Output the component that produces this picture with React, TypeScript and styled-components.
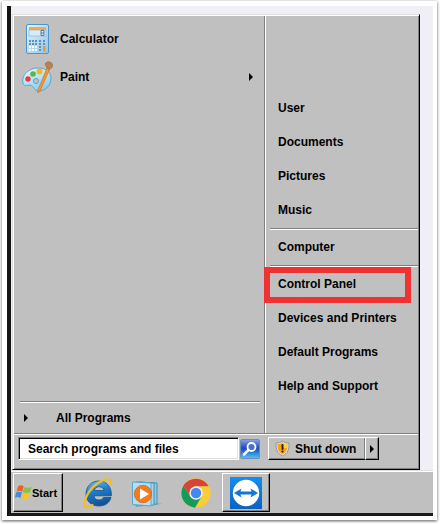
import React from "react";
import styled, { createGlobalStyle } from "styled-components";

const Global = createGlobalStyle`
  * { box-sizing: border-box; }
  body { margin: 0; background: #fff; }
  body, button, input { font-family: "Liberation Sans", Arial, sans-serif; font-size: 12px; font-weight: 700; color: #000; }
  button { cursor: pointer; }
`;

const Frame = styled.main`
  margin: 1px 3px 3px 2px;
  padding: 5px 4px 4px 5px;
  background: #fff;
  box-shadow: 0 1px 3px rgba(0, 0, 0, 0.65);
`;

const Desktop = styled.div`
  padding-top: 8px;
  border-left: 4px solid #141414;
  border-bottom: 3px solid #1c1a1c;
  background: #f0eff6;
`;

const StartMenu = styled.section`
  margin: 0 13px 0 1px;
  background: #c0c0c0;
  border: 1px solid #dfdfdf;
  border-right-color: #000;
  border-bottom-color: #000;
  box-shadow: inset 1px 1px #fff, inset -1px -1px #808080;
  padding: 1px;
`;

const Columns = styled.div`
  display: grid;
  grid-template-columns: minmax(0, 1fr) 153px;
`;

const Programs = styled.div`
  display: flex;
  flex-direction: column;
  padding: 4px 4px 0 6px;
  border-right: 1px solid #808080;
`;

const Spacer = styled.div`
  flex: 1;
`;

const Places = styled.nav`
  display: flex;
  flex-direction: column;
  padding: 75px 0 30px;
  border-left: 1px solid #fff;
`;

const Groove = styled.hr<{ $inset?: boolean }>`
  flex: none;
  width: auto;
  height: 2px;
  margin: ${(p) => (p.$inset ? "1px 0 0 4px" : "0")};
  border: 0;
  border-top: 1px solid #808080;
  border-bottom: 1px solid #fff;
`;

const PlainButton = styled.button`
  display: flex;
  align-items: center;
  padding: 0;
  border: 0;
  background: none;
  text-align: left;
`;

const ProgramItem = styled(PlainButton)`
  height: 38px;
  gap: 7px;
  padding: 0 7px 0 1px;
`;

const ProgramName = styled.span`
  flex: 1;
`;

const AllPrograms = styled(PlainButton)`
  height: 30px;
  gap: 28px;
  padding: 0 0 0 4px;
`;

const PlaceItem = styled(PlainButton)`
  position: relative;
  height: 34px;
  padding: 0 0 0 12px;
`;

const Highlight = styled.span`
  position: absolute;
  inset: 0 7px -2px -2px;
  border: 6px solid #f03232;
  pointer-events: none;
`;

const MenuFooter = styled.div`
  display: grid;
  grid-template-columns: minmax(0, 1fr) 150px;
  padding: 2px 0 8px 4px;
`;

const SearchBar = styled.form`
  display: flex;
  align-items: center;
  gap: 1px;
  padding-right: 8px;
`;

const SearchInput = styled.input`
  flex: 1;
  min-width: 0;
  height: 23px;
  padding: 0 9px;
  border: 1px solid #808080;
  border-right-color: #fff;
  border-bottom-color: #fff;
  border-radius: 0;
  background: #fff;
  box-shadow: inset 1px 1px #000, inset -1px -1px #dfdfdf;

  &::placeholder { color: #000; opacity: 1; }
`;

const SearchButton = styled.button`
  display: flex;
  width: 20px;
  height: 20px;
  padding: 0;
  border: 0;
  background: none;
`;

const Raised = styled.button`
  display: flex;
  align-items: center;
  padding: 0;
  border: 1px solid #fff;
  border-right-color: #000;
  border-bottom-color: #000;
  background: #c0c0c0;
  box-shadow: inset -1px -1px #808080;
`;

const Power = styled.div`
  display: flex;
`;

const ShutDown = styled(Raised)`
  width: 97px;
  height: 23px;
  gap: 5px;
  padding-left: 6px;
  border-right: 0;
`;

const PowerOptions = styled(Raised)`
  width: 14px;
  height: 23px;
  justify-content: center;
`;

const Taskbar = styled.footer`
  display: flex;
  align-items: flex-start;
  height: 43px;
  padding: 2px 0 0 2px;
  border-top: 1px solid #dfdfdf;
  background: #c0c0c0;
  box-shadow: inset 0 1px #fff;
`;

const StartButton = styled(Raised)`
  width: 50px;
  height: 39px;
  padding-left: 1px;
  font-size: 11px;
`;

const Launchers = styled.div`
  display: flex;
  margin-left: 10px;
`;

const Launcher = styled(PlainButton)`
  width: 49px;
  height: 39px;
  justify-content: center;
`;

const ActiveTask = styled(Raised)`
  width: 48px;
  height: 39px;
  margin-left: 2px;
  justify-content: center;
`;

const Arrow = () => (
  <svg width="4" height="8" viewBox="0 0 4 8" aria-hidden="true">
    <path d="M0 0v8l4-4z" fill="#000" />
  </svg>
);

const CalculatorIcon = () => (
  <svg width="32" height="32" viewBox="0 0 32 32" aria-hidden="true">
    <defs>
      <linearGradient id="calc" x2="1" y2="1">
        <stop stopColor="#e4f5fd" />
        <stop offset="1" stopColor="#8ec5e8" />
      </linearGradient>
    </defs>
    <rect x="5.500" y="1.500" width="22" height="29" rx="1.500" fill="url(#calc)" stroke="#4a97cc" />
    <rect x="8" y="4" width="17" height="3" fill="#f5ac3d" />
    <rect x="8" y="7" width="17" height="6" fill="#dceaf5" stroke="#82aed0" strokeWidth=".6" />
    <path d="M20 7.500h3v5h-3zM20 10h3" fill="none" stroke="#5a73a8" />
    {[17, 20, 23, 26].map((y) =>
      [8, 11, 14, 18, 22].map((x) => (
        <rect key={`${x}-${y}`} x={x} y={y} width="2" height="2" fill={x < 17 && y > 20 ? "#fff" : "#5f90bd"} />
      )),
    )}
    <rect x="22" y="23" width="2.500" height="5.500" fill="#f2962a" />
  </svg>
);

const PaintIcon = () => (
  <svg width="32" height="32" viewBox="0 0 32 32" aria-hidden="true">
    <defs>
      <linearGradient id="palette" x2=".6" y2="1">
        <stop stopColor="#f2fbff" />
        <stop offset="1" stopColor="#8ccbe9" />
      </linearGradient>
    </defs>
    <path
      d="M2 22C0 14 8 7 17 7c8 0 13 4 13 10 0 8-6 13-12 13-5 0-5-5-9-6-3 0-6 2-7-2z"
      fill="url(#palette)"
      stroke="#5fa4ce"
    />
    <circle cx="7" cy="18" r="2.700" fill="#de4140" />
    <circle cx="12" cy="13" r="2.800" fill="#54b848" />
    <circle cx="18.500" cy="10.500" r="3" fill="#f6b427" />
    <circle cx="15" cy="20" r="2.500" fill="#b4c8d2" stroke="#5d9cc3" />
    <path d="M26 7l2.500 1.500L18.500 31l-2 .500.300-2z" fill="#f39a32" stroke="#d36d1c" strokeWidth=".7" />
    <path d="M25.500 6.500l-1.500-3.500c1.500-3 6-3 8 1 0 2-1.500 3-4 4.500z" fill="#b98256" stroke="#8f5d38" strokeWidth=".5" />
  </svg>
);

const SearchIcon = () => (
  <svg width="20" height="20" viewBox="0 0 20 20" aria-hidden="true">
    <defs>
      <linearGradient id="search" x2="0" y2="1">
        <stop stopColor="#8aa6e8" />
        <stop offset=".45" stopColor="#2248bb" />
        <stop offset=".6" stopColor="#2467cc" />
        <stop offset="1" stopColor="#4ccdf0" />
      </linearGradient>
    </defs>
    <rect x=".5" y=".5" width="19" height="19" rx="1.500" fill="url(#search)" stroke="#7189bd" />
    <circle cx="11.500" cy="8" r="4" fill="#4673cf" stroke="#fff" strokeWidth="1.800" />
    <path d="M8.500 11l-4.500 4.500" stroke="#fff" strokeWidth="2.500" strokeLinecap="round" />
  </svg>
);

const ShieldIcon = () => (
  <svg width="15" height="17" viewBox="0 0 15 17" aria-hidden="true">
    <path d="M7.500 1c2 1.500 4 2 6.500 2 0 7-1 10-6.500 13C2 13 1 10 1 3c2.500 0 4.500-.5 6.500-2z" fill="#e2e2e2" stroke="#959595" />
    <path d="M7.500 2.500c1.500 1 3 1.500 5 1.500 0 5.500-1 8-5 10.500C3.500 12 2.500 9.500 2.500 4c2 0 3.500-.5 5-1.500z" fill="#f5a51d" />
    <path d="M7.500 2.500c1.500 1 3 1.500 5 1.500v4h-5z" fill="#ffd13e" />
    <path d="M7.500 5v4" stroke="#32240c" strokeWidth="2" strokeLinecap="round" />
    <circle cx="7.500" cy="11.500" r="1.100" fill="#32240c" />
  </svg>
);

const WindowsIcon = () => (
  <svg width="17" height="17" viewBox="0 0 16 16" aria-hidden="true">
    <path d="M3 2c2-1.300 3.700-1 5.200.3L6.700 7.500C5 6.200 3.500 6.200 1.500 7z" fill="#e9602a" />
    <path d="M8.800 2.800c2 1 4.300 1 7 0l-1.600 5c-2 1-4.600 1-6.800 0z" fill="#8cc04a" />
    <path d="M1.200 7.800c2-.9 3.700-.8 5.300.3L5 13.300C3.500 12 2 12.100-.2 13z" fill="#3f8bdc" />
    <path d="M7.100 8.600c2.200 1 4.700 1 6.700.1L12.300 14c-2 1-4.600 1-6.700-.2z" fill="#f7c431" />
  </svg>
);

const ExplorerIcon = () => (
  <svg width="32" height="32" viewBox="0 0 32 32" aria-hidden="true">
    <defs>
      <linearGradient id="ie" x2=".3" y2="1">
        <stop stopColor="#6cc8f4" />
        <stop offset=".5" stopColor="#1d7ccb" />
        <stop offset="1" stopColor="#155396" />
      </linearGradient>
    </defs>
    <path
      d="M17 4C9.500 4 4 9.500 4 17s5.500 12 13 12c6 0 10.500-3 12-8.500h-7.500c-1 1.800-2.500 2.500-4.500 2.500-3 0-5-1.500-5-4.200h17.300C30 10.500 25 4 17 4zM12.200 13.600c.5-2.400 2.300-3.900 5-3.900 2.600 0 4.500 1.500 4.800 3.900z"
      fill="url(#ie)"
      stroke="#174f88"
      strokeWidth=".8"
    />
    <path
      d="M28.500 8c.8-3 .4-5-1.500-5.500C21 1 10 9 5.500 17.500 2 24 1.500 29 4 30c1.500.5 4-.3 6.500-2"
      fill="none"
      stroke="#f4bd24"
      strokeWidth="2.200"
      strokeLinecap="round"
    />
  </svg>
);

const MediaIcon = () => (
  <svg width="32" height="32" viewBox="0 0 32 32" aria-hidden="true">
    <path d="M22 27l9-1-4 2H12z" fill="#8d989e" opacity=".6" />
    <path d="M8 5l18 1v21l-18 1z" fill="#8ec8e2" stroke="#4190b8" />
    <path d="M5 5l18 1v22l-18 1z" fill="#a9d7ea" stroke="#4190b8" />
    <path d="M1.500 5l18.500 1v23l-18.500-1.500z" fill="#b3dff0" stroke="#5ba6cb" />
    <circle cx="12" cy="17" r="8.700" fill="#f37b24" stroke="#d95c10" strokeWidth=".7" />
    <path d="M9 11.500v11l9-5.500z" fill="#fff" />
  </svg>
);

const ChromeIcon = () => (
  <svg width="32" height="32" viewBox="0 0 32 32" aria-hidden="true">
    <circle cx="16" cy="16" r="14.700" fill="#fbcc37" />
    <path d="M16 16L10.200 19.300 3.300 8.700A14.700 14.700 0 0 1 28.700 9.300H16z" fill="#d84437" />
    <path d="M3.300 8.700A14.700 14.700 0 0 0 15 30.700l6.800-11.400L16 16l-5.800 3.300z" fill="#159a57" />
    <circle cx="16" cy="16" r="6.700" fill="#f3f3f3" />
    <circle cx="16" cy="16" r="5.200" fill="#4486f4" />
  </svg>
);

const TeamViewerIcon = () => (
  <svg width="32" height="32" viewBox="0 0 32 32" aria-hidden="true">
    <defs>
      <linearGradient id="team" x2="0" y2="1">
        <stop stopColor="#168df0" />
        <stop offset="1" stopColor="#0863c2" />
      </linearGradient>
    </defs>
    <rect width="32" height="32" fill="url(#team)" />
    <circle cx="16" cy="16" r="13.200" fill="#fff" />
    <path d="M4 16l7.500-4.500-1 3h11l-1-3L28 16l-7.500 4.500 1-3h-11l1 3z" fill="#1274d4" />
  </svg>
);

const placeGroups = [
  ["User", "Documents", "Pictures", "Music"],
  ["Computer"],
  ["Control Panel", "Devices and Printers", "Default Programs", "Help and Support"],
];

export default function App() {
  return (
    <>
      <Global />
      <Frame>
        <Desktop>
          <StartMenu aria-label="Start menu">
            <Columns>
              <Programs>
                <ProgramItem>
                  <CalculatorIcon />
                  <ProgramName>Calculator</ProgramName>
                </ProgramItem>
                <ProgramItem>
                  <PaintIcon />
                  <ProgramName>Paint</ProgramName>
                  <Arrow />
                </ProgramItem>
                <Spacer />
                <Groove />
                <AllPrograms>
                  <Arrow />
                  All Programs
                </AllPrograms>
              </Programs>
              <Places>
                {placeGroups.map((group, index) => (
                  <React.Fragment key={group[0]}>
                    {index > 0 && <Groove $inset />}
                    {group.map((name) => (
                      <PlaceItem key={name}>
                        {name}
                        {name === "Control Panel" && <Highlight />}
                      </PlaceItem>
                    ))}
                  </React.Fragment>
                ))}
              </Places>
            </Columns>
            <Groove />
            <MenuFooter>
              <SearchBar onSubmit={(event) => event.preventDefault()}>
                <SearchInput aria-label="Search programs and files" placeholder="Search programs and files" />
                <SearchButton aria-label="Search">
                  <SearchIcon />
                </SearchButton>
              </SearchBar>
              <Power>
                <ShutDown>
                  <ShieldIcon />
                  Shut down
                </ShutDown>
                <PowerOptions aria-label="Power options">
                  <Arrow />
                </PowerOptions>
              </Power>
            </MenuFooter>
          </StartMenu>
          <Taskbar>
            <StartButton>
              <WindowsIcon />
              Start
            </StartButton>
            <Launchers>
              <Launcher aria-label="Internet Explorer">
                <ExplorerIcon />
              </Launcher>
              <Launcher aria-label="Media Player">
                <MediaIcon />
              </Launcher>
              <Launcher aria-label="Chrome">
                <ChromeIcon />
              </Launcher>
              <ActiveTask aria-label="TeamViewer">
                <TeamViewerIcon />
              </ActiveTask>
            </Launchers>
          </Taskbar>
        </Desktop>
      </Frame>
    </>
  );
}
